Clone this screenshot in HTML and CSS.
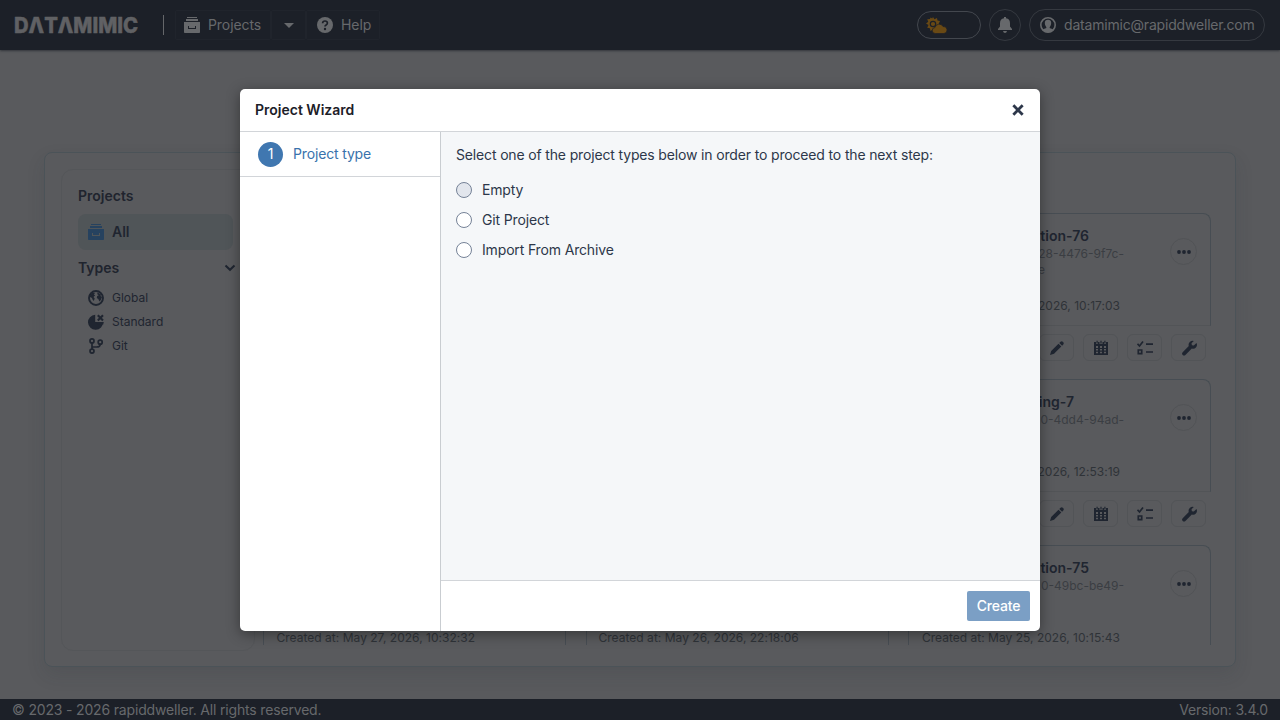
FILE: index.html
```html
<!DOCTYPE html>
<html lang="en">
<head>
<meta charset="utf-8">
<title>DATAMIMIC</title>
<link rel="stylesheet" href="styles.css">
</head>
<body>
<svg class="defs" aria-hidden="true">
  <symbol id="archive" viewBox="0 0 16 16"><path fill="currentColor" fill-rule="evenodd" d="M3 0h10v1H3zM2 2h12v2H2zM0 5h16v10.200q0 .8-.8.8H.8Q0 16 0 15.200zM4 9v3h8V9h-1v2H5V9z"/></symbol>
  <symbol id="help" viewBox="0 0 16 16"><circle cx="8" cy="8" r="8" fill="currentColor"/><path class="cut" d="M5.600 6.300q.1-2.300 2.400-2.300t2.400 2q0 1.200-1.300 1.900Q8 8.500 8 9.500"/><circle class="cut-dot" cx="8" cy="12" r="1.200"/></symbol>
  <symbol id="weather" viewBox="0 0 21 17"><path fill="currentColor" d="m7 0 1.500 2.200L11 1l.5 2.600 2.500.5-1.200 2.400L14 8.500l-3 .5-3 5-1-1.500L4.500 14l-.6-2.700-2.700-.6L2.500 8 0 6.500l2.300-1.700L1.200 2.300 4 2 4.500.5l1.700 1z"/><circle class="sun-ring" cx="7" cy="7" r="2.700"/><path fill="currentColor" class="cloud" d="M9.500 16.500a3 3 0 0 1-.5-6 4.300 4.300 0 0 1 8-1 3.500 3.500 0 0 1 1 7z"/></symbol>
  <symbol id="bell" viewBox="0 0 16 16"><path fill="currentColor" d="M7 0h2v1.300q4 .7 4 5v3.200L15 12v1H1v-1l2-2.500V6.300q0-4.300 4-5zM6 14h4q-.4 2-2 2t-2-2"/></symbol>
  <symbol id="user" viewBox="0 0 16 16"><circle cx="8" cy="8" r="7.200" fill="none" stroke="currentColor" stroke-width="1.600"/><path fill="currentColor" d="M2.500 13q.7-.9 3.300-1.700.9-.3.500-1.100Q4.800 8.500 4.800 6 4.800 2.800 8 2.800T11.200 6q0 2.500-1.500 4.200-.4.800.5 1.100 2.600.8 3.300 1.700-2 2.500-5.500 2.500T2.500 13"/></symbol>
  <symbol id="globe" viewBox="0 0 16 16"><circle cx="8" cy="8" r="7" fill="none" stroke="currentColor" stroke-width="1.900"/><path fill="currentColor" d="m2 5.500 2.500-2.700L7 3 5.800 4.500l1.400.7L5.500 7l1.200 1.500L5.800 11 4.500 9.500 4 8 2 7zM9.500 2.500l3.500 2-.5 1.500 1.500 1-1.200 3-1.300 1.500L10.300 9 8.800 8l.4-2 1.600-.7-1.500-1z"/></symbol>
  <symbol id="pie" viewBox="0 0 16 16"><path fill="currentColor" d="M7.200 .8V8h7.800a7.500 7.500 0 1 1-7.800-7.200"/><path fill="currentColor" d="m7.200 8 3 2.500h5L15.800 8z"/><path d="m9.800 1.200 5.200 5.200m0-5.200-5.200 5.200" fill="none" stroke="currentColor" stroke-width="2.100"/></symbol>
  <symbol id="branch" viewBox="0 0 16 16"><g fill="none" stroke="currentColor" stroke-width="1.700"><circle cx="4" cy="2.900" r="2"/><circle cx="4" cy="13.100" r="2"/><circle cx="12.200" cy="4.200" r="2"/><path d="M4 5v6m0-2h4.500q3.700 0 3.700-2.800"/></g></symbol>
  <symbol id="dots" viewBox="0 0 16 16"><g fill="currentColor"><circle cx="3" cy="8" r="1.900"/><circle cx="8" cy="8" r="1.900"/><circle cx="13" cy="8" r="1.900"/></g></symbol>
  <symbol id="pencil" viewBox="0 0 16 16"><path fill="currentColor" d="m1 15 1.200-4 7.300-7.300 2.800 2.800L5 13.800zM10.300 2.900l1.200-1.200q1.300-1 2.300 0l.5.5q1 1 0 2.200l-1.200 1.300z"/></symbol>
  <symbol id="calendar" viewBox="0 0 16 16"><path fill="currentColor" fill-rule="evenodd" d="M1 2h2v2h2V2h1.500v2h3V2H11v2h2V2h2v13H1zm2 4v2h2V6zm4 0v2h2V6zm4 0v2h2V6zM3 9v1.500h2V9zm4 0v1.500h2V9zm4 0v1.500h2V9zM3 11.800v1.400h2v-1.400zm4 0v1.400h2v-1.400zm4 0v1.400h2v-1.400z"/><path fill="currentColor" d="M3.500.7h1.200v2.800H3.500zm3.900 0h1.200v2.800H7.400zm3.900 0h1.200v2.800h-1.200z"/></symbol>
  <symbol id="tasks" viewBox="0 0 16 16"><g fill="none" stroke="currentColor" stroke-width="1.700"><path d="m.5 3.800 2 2.200L6 1.500M9 4.200h7M9 12h7"/><path d="M1.300 10h3.400v3.600H1.300z"/></g></symbol>
  <symbol id="wrench" viewBox="0 0 16 16"><path fill="currentColor" d="M12.800 1 10.500 3.300l.4 1.900 1.900.4L15.500 3q1.200 2.500-.6 4.600-1.700 1.800-4.100 1l-6.400 6.300q-1.400 1.100-2.700 0-1.300-1.300 0-2.700l6.100-6.100Q7 3.700 8.800 1.900 10.600.300 12.800 1"/></symbol>
</svg>

<div class="app">
  <header class="topbar">
    <svg class="logo" viewBox="0 0 126 20"><text x="0" y="18" textLength="124" lengthAdjust="spacingAndGlyphs">DΛTΛMIMIC</text></svg>
    <span class="divider"></span>
    <nav class="menu">
      <a class="menu-item projects"><svg class="icon"><use href="#archive"/></svg>Projects</a>
      <a class="menu-item more"><span class="caret"></span></a>
      <a class="menu-item help"><svg class="icon"><use href="#help"/></svg>Help</a>
    </nav>
    <div class="tools">
      <span class="theme"><svg><use href="#weather"/></svg></span>
      <span class="notify"><svg class="icon"><use href="#bell"/></svg></span>
      <span class="account"><svg class="icon"><use href="#user"/></svg>datamimic@rapiddweller.com</span>
    </div>
  </header>

  <main class="content">
    <section class="panel">
      <aside class="sidebar">
        <h2 class="side-title">Projects</h2>
        <a class="all"><svg class="icon"><use href="#archive"/></svg>All</a>
        <h2 class="side-title types">Types<svg class="chevron" viewBox="0 0 12 8"><path d="m1.500 1.500 4.500 4.300 4.500-4.300"/></svg></h2>
        <ul class="type-list">
          <li><svg class="icon"><use href="#globe"/></svg>Global</li>
          <li><svg class="icon"><use href="#pie"/></svg>Standard</li>
          <li><svg class="icon"><use href="#branch"/></svg>Git</li>
        </ul>
      </aside>
      <div class="cards">
        <article class="card last-col">
          <div class="card-body"><div class="card-text"><h3>tion-76</h3><p class="uid">28-4476-9f7c-</p><p class="uid second">e</p></div><span class="dots"><svg class="icon"><use href="#dots"/></svg></span><p class="date">2026, 10:17:03</p></div>
          <div class="actions"><span><svg><use href="#pencil"/></svg></span><span><svg><use href="#calendar"/></svg></span><span><svg><use href="#tasks"/></svg></span><span><svg><use href="#wrench"/></svg></span></div>
        </article>
        <article class="card last-col">
          <div class="card-body"><div class="card-text"><h3 class="shorter">ing-7</h3><p class="uid">0-4dd4-94ad-</p></div><span class="dots"><svg class="icon"><use href="#dots"/></svg></span><p class="date">2026, 12:53:19</p></div>
          <div class="actions"><span><svg><use href="#pencil"/></svg></span><span><svg><use href="#calendar"/></svg></span><span><svg><use href="#tasks"/></svg></span><span><svg><use href="#wrench"/></svg></span></div>
        </article>
        <article class="card"><div class="card-body"><p class="date">Created at: May 27, 2026, 10:32:32</p></div></article>
        <article class="card"><div class="card-body"><p class="date">Created at: May 26, 2026, 22:18:06</p></div></article>
        <article class="card last-col"><div class="card-body"><div class="card-text"><h3>tion-75</h3><p class="uid">0-49bc-be49-</p></div><span class="dots"><svg class="icon"><use href="#dots"/></svg></span><p class="date">Created at: May 25, 2026, 10:15:43</p></div></article>
      </div>
    </section>
  </main>

  <footer class="footer"><span>© 2023 - 2026 rapiddweller. All rights reserved.</span><span>Version: 3.4.0</span></footer>
</div>

<div class="modal" role="dialog">
  <div class="modal-head"><h1>Project Wizard</h1><svg class="close" viewBox="0 0 12 12"><path d="m2 2 8 8m0-8-8 8"/></svg></div>
  <div class="modal-main">
    <div class="steps"><div class="step"><span class="step-number">1</span>Project type</div></div>
    <div class="step-pane">
      <div class="form">
        <p class="prompt">Select one of the project types below in order to proceed to the next step:</p>
        <label class="option"><span class="radio focused"></span>Empty</label>
        <label class="option"><span class="radio"></span>Git Project</label>
        <label class="option"><span class="radio"></span>Import From Archive</label>
      </div>
      <div class="modal-foot"><button class="create">Create</button></div>
    </div>
  </div>
</div>
</body>
</html>
```
FILE: styles.css
```css
* { box-sizing: border-box; }
body { margin: 0; width: 1280px; height: 720px; overflow: hidden; font: 14px/20px Inter, sans-serif; color: #1f2530; background: #595a5d; }
h1, h2, h3, p, ul { margin: 0; padding: 0; }
svg { display: block; flex: none; }
.defs { position: absolute; width: 0; height: 0; }
.icon { width: 16px; height: 16px; }
.app { display: flex; flex-direction: column; height: 720px; }

.topbar { display: flex; align-items: center; flex: none; height: 50px; padding: 0 15px 0 14px; background: #1c2028; color: #67696c; box-shadow: 0 1px 2px #33363b; }
.logo { width: 126px; height: 20px; overflow: visible; fill: #606164; stroke: #606164; stroke-width: .5; font: 800 22px Inter, sans-serif; }
.divider { width: 1px; height: 20px; margin: 0 11px 0 23px; background: #65676a; }
.menu { display: flex; letter-spacing: -.08px; }
.menu-item { display: flex; align-items: center; height: 30px; border: 1px solid #20242c; border-radius: 2px; }
.projects { width: 96px; padding-left: 8px; gap: 8px; }
.more { width: 35px; justify-content: center; }
.help { width: 74px; padding-left: 10px; gap: 8px; }
.caret { border: 5px solid transparent; border-top-color: #67696c; border-bottom: 0; }
.cut { fill: none; stroke: #1c2028; stroke-width: 1.7; }
.cut-dot { fill: #1c2028; }
.tools { display: flex; align-items: center; gap: 8px; margin-left: auto; }
.theme { display: flex; align-items: center; width: 64px; height: 28px; padding-left: 8px; border: 1px solid #43474e; border-radius: 14px; color: #694914; }
.theme svg { width: 21px; height: 17px; }
.sun-ring { fill: none; stroke: #1c2028; stroke-width: 1.200; }
.cloud { stroke: #1c2028; stroke-width: .7; }
.notify { display: grid; place-items: center; width: 32px; height: 32px; border: 1px solid #353940; border-radius: 16px; }
.account { display: flex; align-items: center; gap: 8px; width: 236px; height: 32px; padding-left: 10px; border: 1px solid #353940; border-radius: 16px; letter-spacing: -.19px; }

.content { flex: 1; padding: 102px 44px 0; }
.panel { display: flex; height: 515px; padding: 16px 24px 0 16px; border: 1px solid #4b5358; border-radius: 8px; box-shadow: 0 8px 18px rgba(40, 48, 52, .13); }
.sidebar { width: 194px; height: 482px; padding: 16px; border: 1px solid #545659; border-radius: 12px; }
.side-title { font-size: 14px; line-height: 20px; font-weight: 600; color: #20242e; }
.all { display: flex; align-items: center; gap: 8px; width: 155px; height: 36px; margin: 8px 0; padding-left: 10px; border-radius: 8px; background: #505558; font-weight: 600; }
.all .icon { color: #26425f; }
.types { display: flex; align-items: center; justify-content: space-between; width: 158px; }
.chevron { width: 12px; height: 8px; fill: none; stroke: #1f2530; stroke-width: 2; }
.type-list { margin-top: 8px; list-style: none; font-size: 12px; }
.type-list li { display: flex; align-items: center; gap: 8px; height: 24px; padding-left: 10px; }
.cards { display: grid; grid-template-columns: repeat(3, 303px); grid-template-rows: 166px 166px 100px; column-gap: 19.5px; width: 948px; height: 432px; margin: 44px 0 0 8px; overflow: hidden; }
.last-col { grid-column: 3; }
.card { min-width: 0; height: 166px; }
.card-body { display: grid; grid-template-columns: 203px 1fr; grid-template-rows: 84px 1fr; height: 113px; padding: 0 12px; border: 1px solid #474d53; border-bottom-color: #525457; border-radius: 8px 8px 0 0; }
.card-text { padding-top: 12px; text-align: right; }
.card-text h3 { height: 20px; padding-right: 35px; font-size: 14px; line-height: 20px; font-weight: 600; }
.card-text .shorter { padding-right: 50px; }
.uid { font-size: 12px; line-height: 16px; color: #3b3e43; }
.uid.second { padding-right: 79px; }
.dots { display: grid; place-items: center; width: 27px; height: 27px; margin: 24px 1px 0 auto; border: 1px solid #515356; border-radius: 50%; }
.date { grid-row: 2; width: 199px; font-size: 12px; line-height: 16px; letter-spacing: .02px; text-align: right; color: #2f3338; white-space: nowrap; }
.actions { display: flex; justify-content: flex-end; gap: 9px; padding: 8px 5px; }
.actions span { display: grid; place-items: center; width: 35px; height: 27px; border: 1px solid #525457; border-radius: 6px; }
.actions svg { width: 16px; height: 16px; }

.footer { display: flex; justify-content: space-between; flex: none; height: 21px; padding: 1px 12px 0; background: #1c2028; color: #67696c; letter-spacing: -.17px; }

.modal { position: absolute; left: 240px; top: 89px; display: flex; flex-direction: column; width: 800px; height: 542px; overflow: hidden; border-radius: 5px; background: #fff; box-shadow: 0 3px 14px rgba(0, 0, 0, .4); }
.modal-head { display: flex; align-items: center; justify-content: space-between; flex: none; height: 43px; padding: 0 15px; border-bottom: 1px solid #d2d5d9; color: #1c2028; }
.modal-head h1 { font-size: 14px; line-height: 20px; font-weight: 600; }
.close { width: 14px; height: 14px; fill: none; stroke: #2d374a; stroke-width: 2.4; }
.modal-main { display: flex; flex: 1; letter-spacing: -.155px; }
.steps { width: 200px; }
.step { display: flex; align-items: center; gap: 10px; height: 45px; padding: 0 18px; border-bottom: 1px solid #d2d5d9; color: #3972ac; }
.step-number { display: grid; place-items: center; width: 25px; height: 25px; border-radius: 50%; background: #4077b0; color: #fff; }
.step-pane { display: flex; flex: 1; flex-direction: column; border-left: 1px solid #c9cdd1; }
.form { flex: 1; padding: 13px 15px; background: #f5f7f9; color: #2d374a; }
.prompt { margin-bottom: 10px; }
.option { display: flex; align-items: center; gap: 10px; height: 30px; }
.radio { width: 16px; height: 16px; border: 1px solid #758297; border-radius: 50%; background: #fff; }
.focused { background: #e2e6ed; }
.modal-foot { display: flex; justify-content: flex-end; height: 51px; padding: 10px; border-top: 1px solid #d2d5d9; }
.create { width: 63px; height: 30px; padding: 0; border: 0; border-radius: 2px; background: #7b9fc5; color: #fff; font: 500 14px/20px Inter, sans-serif; letter-spacing: -.15px; }
```
